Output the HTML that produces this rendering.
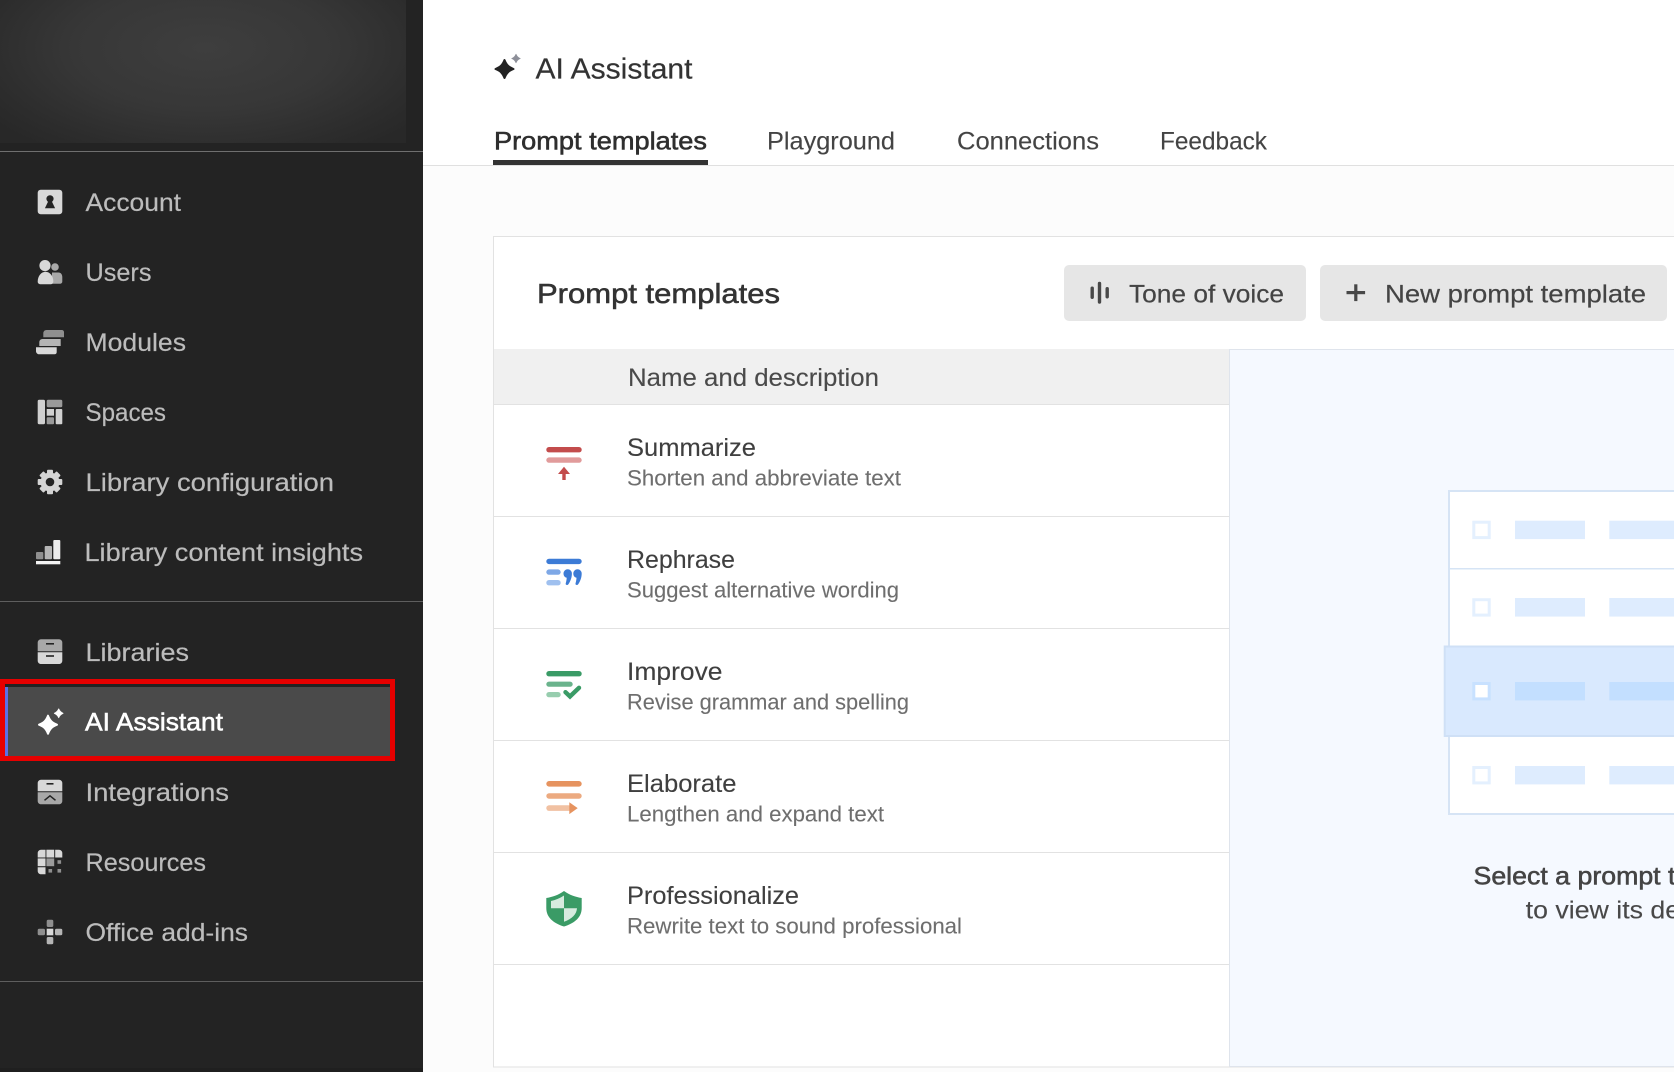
<!DOCTYPE html>
<html lang="en">
<head>
<meta charset="utf-8">
<title>AI Assistant - Prompt templates</title>
<style>
html,body{margin:0;padding:0;background:#fff;overflow:hidden}
svg{display:block}
text{font-family:"Liberation Sans",Arial,sans-serif;font-size:25px}
.nav{fill:#bcbcbc;stroke:#bcbcbc;stroke-width:.2px}
.navon{fill:#fff;stroke:#fff;stroke-width:.55px}
.h1{font-size:29px;fill:#333;stroke:#333;stroke-width:.2px}
.tab{fill:#444;stroke:#444;stroke-width:.12px}
.tabon{fill:#2e2e2e;stroke:#2e2e2e;stroke-width:.55px}
.h2{font-size:28px;fill:#333;stroke:#333;stroke-width:.55px}
.btn{fill:#444;stroke:#444;stroke-width:.2px}
.th{fill:#4a4a4a;stroke:#4a4a4a;stroke-width:.12px}
.rt{fill:#3f3f3f;stroke:#3f3f3f;stroke-width:.12px}
.rd{font-size:22px;fill:#6e6e6e;stroke:#6e6e6e;stroke-width:.1px}
.b{fill:#444;stroke:#444;stroke-width:.55px}
.s{fill:#484848;stroke:#484848;stroke-width:.12px}
</style>
</head>
<body>
<svg xmlns="http://www.w3.org/2000/svg" width="1674" height="1072" viewBox="0 0 1674 1072">
<defs>
<radialGradient id="hero" gradientUnits="userSpaceOnUse" cx="0" cy="0" r="1" gradientTransform="translate(205 48) scale(265 125)">
<stop offset="0" stop-color="#3e3e3e"/><stop offset=".5" stop-color="#373737"/><stop offset=".85" stop-color="#2c2c2c"/><stop offset="1" stop-color="#282828"/>
</radialGradient>
<path id="star" d="M0-9C2-4 4-2 9 0 4 2 2 4 0 9-2 4-4 2-9 0-4-2-2-4 0-9Z" stroke-width="2" stroke-linejoin="round"/>
<clipPath id="page"><rect width="1674" height="1072"/></clipPath>
</defs>
<g clip-path="url(#page)">
<!-- main backgrounds -->
<rect width="1674" height="1072" fill="#fff"/>
<rect x="423" y="165" width="1251" height="907" fill="#fcfcfc"/>
<rect x="423" y="165" width="1251" height="1" fill="#e0e0e0"/>

<!-- sidebar -->
<rect width="423" height="1072" fill="#232323"/>
<rect width="406" height="143" fill="url(#hero)"/>
<rect y="151" width="423" height="1" fill="#6f6f6f"/>
<rect y="601" width="423" height="1" fill="#5e5e5e"/>
<rect y="981" width="423" height="1" fill="#5e5e5e"/>
<rect y="1068" width="423" height="4" fill="#1f1f1f"/>

<!-- selected nav -->
<rect x="2.5" y="681.5" width="390" height="77" fill="#232323" stroke="#e60000" stroke-width="5"/>
<rect x="5" y="687" width="385" height="69" fill="#4a4a4a"/>
<rect x="5" y="687" width="3" height="69" fill="#5b6fe6"/>

<!-- nav text -->
<text class="nav" x="85.500" y="211" textLength="95.500" lengthAdjust="spacingAndGlyphs">Account</text>
<text class="nav" x="85.500" y="281" textLength="66" lengthAdjust="spacingAndGlyphs">Users</text>
<text class="nav" x="85.500" y="351" textLength="100.500" lengthAdjust="spacingAndGlyphs">Modules</text>
<text class="nav" x="85.500" y="421" textLength="80.500" lengthAdjust="spacingAndGlyphs">Spaces</text>
<text class="nav" x="85.500" y="491" textLength="248.500" lengthAdjust="spacingAndGlyphs">Library configuration</text>
<text class="nav" x="84.500" y="561" textLength="278.500" lengthAdjust="spacingAndGlyphs">Library content insights</text>
<text class="nav" x="85.500" y="661" textLength="103.500" lengthAdjust="spacingAndGlyphs">Libraries</text>
<text class="navon" x="85" y="730.500" textLength="138" lengthAdjust="spacingAndGlyphs">AI Assistant</text>
<text class="nav" x="85.500" y="801" textLength="143.500" lengthAdjust="spacingAndGlyphs">Integrations</text>
<text class="nav" x="85.500" y="871" textLength="120.500" lengthAdjust="spacingAndGlyphs">Resources</text>
<text class="nav" x="85.500" y="941" textLength="162.500" lengthAdjust="spacingAndGlyphs">Office add-ins</text>

<!-- account icon -->
<rect x="37.700" y="189.700" width="24.600" height="24.600" rx="3" fill="#d8d8d8"/>
<circle cx="50" cy="198.800" r="3.600" fill="#232323"/>
<path d="M48.600 200.500h2.800l3.700 7.700H44.900z" fill="#232323"/>
<!-- users -->
<circle cx="55" cy="267" r="3.800" fill="#a8a8a8"/>
<path d="M52 272.500h6.500c2.400 0 3.800 2 3.800 4.700v4.300c0 1.400-1 2.300-2.300 2.300H52z" fill="#a8a8a8"/>
<circle cx="45" cy="265.600" r="5.600" fill="#d8d8d8"/>
<path d="M45.500 271.800c4.500 0 7.800 4.500 7.800 9.500 0 2-1.200 3-3 3H41c-2.100 0-3.300-1-3.300-2.800 0-5.300 3.600-9.700 7.800-9.700z" fill="#d8d8d8"/>
<!-- modules -->
<path d="M46.500 330h15.300c1.300 0 2.200.9 2.200 2.200v5.100H43.300v-4.100c0-1.800 1.400-3.200 3.200-3.200z" fill="#8f8f8f"/>
<path d="M42.500 339h18.200v7H39.300v-3.800c0-1.800 1.400-3.200 3.200-3.200z" fill="#b5b5b5"/>
<path d="M36 347.300h20.700v4.800c0 1.300-.9 2.200-2.200 2.200H39.200c-1.800 0-3.200-1.400-3.200-3.200z" fill="#d8d8d8"/>
<!-- spaces -->
<rect x="37.700" y="399.700" width="7.300" height="24.600" rx="1.500" fill="#d0d0d0"/>
<rect x="46.700" y="399.700" width="15.600" height="7.600" rx="1.500" fill="#9a9a9a"/>
<rect x="46.700" y="409" width="7.300" height="6.700" fill="#d0d0d0"/>
<rect x="55.700" y="409" width="6.600" height="15.300" rx="1" fill="#d0d0d0"/>
<rect x="46.700" y="417.300" width="7.300" height="7" rx="1" fill="#9a9a9a"/>
<!-- gear -->
<g transform="translate(50 482)" fill="#d4d4d4">
<rect x="-3" y="-12.300" width="6" height="24.600" rx="1"/>
<rect x="-3" y="-12.300" width="6" height="24.600" rx="1" transform="rotate(45)"/>
<rect x="-3" y="-12.300" width="6" height="24.600" rx="1" transform="rotate(90)"/>
<rect x="-3" y="-12.300" width="6" height="24.600" rx="1" transform="rotate(135)"/>
<circle r="9.500"/>
<circle r="4.300" fill="#232323"/>
</g>
<!-- insights -->
<rect x="36" y="552" width="7.300" height="7.300" rx="1" fill="#8f8f8f"/>
<rect x="44.700" y="546" width="7.300" height="13.300" rx="1" fill="#b5b5b5"/>
<rect x="53.300" y="540" width="7" height="19.300" rx="1" fill="#ececec"/>
<rect x="36" y="561" width="24.300" height="3.300" fill="#f2f2f2"/>
<!-- libraries -->
<path d="M41 639.300h18c1.800 0 3.300 1.500 3.300 3.300v8.700H37.700v-8.700c0-1.800 1.500-3.300 3.300-3.300z" fill="#a8a8a8"/>
<path d="M37.700 652.300h24.600v8.400c0 1.800-1.500 3.300-3.300 3.300H41c-1.800 0-3.300-1.500-3.300-3.300z" fill="#d8d8d8"/>
<rect x="46" y="643" width="8" height="1.600" fill="#232323"/>
<rect x="46" y="655.200" width="8" height="1.600" fill="#232323"/>
<!-- AI star -->
<use href="#star" transform="translate(48 724.700)" fill="#fff" stroke="#fff"/>
<use href="#star" transform="translate(58.700 713.300) scale(.48)" fill="#fff" stroke="#fff"/>
<!-- integrations -->
<path d="M41 779.700h18c1.800 0 3.300 1.500 3.300 3.300v8.300H37.700v-8.300c0-1.800 1.500-3.300 3.300-3.300z" fill="#d8d8d8"/>
<path d="M37.700 792.300h24.600v8.700c0 1.800-1.500 3.300-3.300 3.300H41c-1.800 0-3.300-1.500-3.300-3.300z" fill="#a8a8a8"/>
<rect x="46.500" y="783" width="7" height="1.600" fill="#232323"/>
<path d="M44.500 800.300l5.500-4.500 5.500 4.500" fill="none" stroke="#232323" stroke-width="1.500"/>
<!-- resources -->
<g fill="#d8d8d8">
<path d="M41 849.700h4.500v7.800h-7.800v-4.500c0-1.800 1.500-3.300 3.300-3.300z"/>
<rect x="46.400" y="849.700" width="7.800" height="7.800"/>
<path d="M55.200 849.700h3.800c1.800 0 3.300 1.500 3.300 3.300v4.500h-7.100z"/>
<rect x="37.700" y="858.400" width="7.800" height="7.800"/>
<path d="M37.700 867.200h7.800v7.100h-4.500c-1.800 0-3.300-1.500-3.300-3.300z"/>
</g>
<rect x="46.400" y="858.400" width="7.800" height="7.800" fill="#9a9a9a"/>
<rect x="57.500" y="860.200" width="3.600" height="3.600" fill="#8f8f8f"/>
<rect x="48.500" y="869" width="3.600" height="3.600" fill="#8f8f8f"/>
<rect x="57.500" y="869" width="3.600" height="3.600" fill="#8f8f8f"/>
<!-- office -->
<rect x="46.700" y="928.700" width="6.600" height="6.600" fill="#d8d8d8"/>
<rect x="46.700" y="919.700" width="6.600" height="7.300" rx="1.500" fill="#8f8f8f"/>
<rect x="37.700" y="928.700" width="7.300" height="6.600" rx="1.500" fill="#8f8f8f"/>
<rect x="55" y="928.700" width="7.300" height="6.600" rx="1.500" fill="#b5b5b5"/>
<rect x="46.700" y="937" width="6.600" height="7.300" rx="1.500" fill="#b5b5b5"/>

<!-- header -->
<use href="#star" transform="translate(504.500 69)" fill="#222" stroke="#222"/>
<use href="#star" transform="translate(516 58.500) scale(.46)" fill="#8d8f99" stroke="#8d8f99"/>
<text class="h1" x="535.500" y="78.500" textLength="157" lengthAdjust="spacingAndGlyphs">AI Assistant</text>

<!-- tabs -->
<text class="tabon" x="494" y="149.500" textLength="213" lengthAdjust="spacingAndGlyphs">Prompt templates</text>
<rect x="493" y="160" width="215" height="5" fill="#333"/>
<text class="tab" x="767" y="149.500" textLength="128" lengthAdjust="spacingAndGlyphs">Playground</text>
<text class="tab" x="957" y="149.500" textLength="142" lengthAdjust="spacingAndGlyphs">Connections</text>
<text class="tab" x="1160" y="149.500" textLength="107" lengthAdjust="spacingAndGlyphs">Feedback</text>

<!-- card -->
<rect x="493.500" y="236.500" width="1200" height="830.500" fill="#fff" stroke="#e2e2e2"/>
<text class="h2" x="537" y="303" textLength="243" lengthAdjust="spacingAndGlyphs">Prompt templates</text>

<!-- buttons -->
<rect x="1064" y="265" width="242" height="56" rx="5" fill="#e6e6e6"/>
<rect x="1320" y="265" width="347" height="56" rx="5" fill="#e6e6e6"/>
<g fill="#484848">
<rect x="1090.500" y="286.500" width="3.400" height="12.500" rx="1.700"/>
<rect x="1097.800" y="281.700" width="3.400" height="22" rx="1.700"/>
<rect x="1105.500" y="287" width="3.400" height="11.500" rx="1.700"/>
<rect x="1346.500" y="291" width="18.600" height="3.200"/>
<rect x="1354.200" y="284.300" width="3.200" height="16.800"/>
</g>
<text class="btn" x="1129" y="302.500" textLength="155" lengthAdjust="spacingAndGlyphs">Tone of voice</text>
<text class="btn" x="1385" y="302.500" textLength="261" lengthAdjust="spacingAndGlyphs">New prompt template</text>

<!-- table header -->
<rect x="494" y="349" width="735" height="55" fill="#f0f0f0"/>
<text class="th" x="628" y="386" textLength="251" lengthAdjust="spacingAndGlyphs">Name and description</text>

<!-- row lines -->
<g fill="#e2e2e2">
<rect x="494" y="404" width="735" height="1"/>
<rect x="494" y="516" width="735" height="1"/>
<rect x="494" y="628" width="735" height="1"/>
<rect x="494" y="740" width="735" height="1"/>
<rect x="494" y="852" width="735" height="1"/>
<rect x="494" y="964" width="735" height="1"/>
</g>

<!-- rows -->
<text class="rt" x="627" y="456" textLength="129" lengthAdjust="spacingAndGlyphs">Summarize</text>
<text class="rd" x="627" y="485.500" textLength="274" lengthAdjust="spacingAndGlyphs">Shorten and abbreviate text</text>
<text class="rt" x="627" y="568" textLength="108" lengthAdjust="spacingAndGlyphs">Rephrase</text>
<text class="rd" x="627" y="597.500" textLength="272" lengthAdjust="spacingAndGlyphs">Suggest alternative wording</text>
<text class="rt" x="627" y="680" textLength="95.500" lengthAdjust="spacingAndGlyphs">Improve</text>
<text class="rd" x="627" y="709.500" textLength="282" lengthAdjust="spacingAndGlyphs">Revise grammar and spelling</text>
<text class="rt" x="627" y="792" textLength="109.500" lengthAdjust="spacingAndGlyphs">Elaborate</text>
<text class="rd" x="627" y="821.500" textLength="257" lengthAdjust="spacingAndGlyphs">Lengthen and expand text</text>
<text class="rt" x="627" y="904" textLength="172" lengthAdjust="spacingAndGlyphs">Professionalize</text>
<text class="rd" x="627" y="933.500" textLength="335" lengthAdjust="spacingAndGlyphs">Rewrite text to sound professional</text>

<!-- summarize icon -->
<rect x="546.300" y="447" width="35.400" height="5.400" rx="2.700" fill="#c34c4c"/>
<rect x="546.300" y="457.400" width="35.400" height="5.400" rx="2.700" fill="#e19b9b"/>
<path d="M564 466.700l6 7.300h-4.300v6h-3.400v-6H558z" fill="#c34c4c"/>
<!-- rephrase icon -->
<rect x="546.300" y="558.700" width="35.400" height="5.400" rx="2.700" fill="#3c7bd6"/>
<rect x="546.300" y="569.400" width="14.400" height="5.400" rx="2.700" fill="#7ea8e6"/>
<rect x="546.300" y="580" width="14.400" height="5.400" rx="2.700" fill="#9fc0ef"/>
<path id="q" d="M563.500 573.500a4.200 4.200 0 0 1 8.400 0c0 4-1.500 8-3.700 11-.8 1.100-2.900.4-2.500-1 .5-2 .9-3.500 1-5.800-2-.3-3.200-2-3.200-4.200z" fill="#3c7bd6"/>
<path d="M573.300 573.500a4.200 4.200 0 0 1 8.400 0c0 4-1.500 8-3.700 11-.8 1.100-2.900.4-2.500-1 .5-2 .9-3.500 1-5.800-2-.3-3.200-2-3.200-4.200z" fill="#3c7bd6"/>
<!-- improve icon -->
<rect x="546.300" y="671" width="35.400" height="5.400" rx="2.700" fill="#3a9b66"/>
<rect x="546.300" y="681.600" width="26.400" height="5.200" rx="2.600" fill="#6ab38c"/>
<rect x="546.300" y="692" width="14.400" height="5.300" rx="2.600" fill="#97cdae"/>
<path d="M565.500 692.200l4.500 4.300 9-8.700" fill="none" stroke="#3a9b66" stroke-width="4.400" stroke-linecap="round"/>
<!-- elaborate icon -->
<rect x="546.300" y="781" width="35.400" height="5.600" rx="2.800" fill="#e6935f"/>
<rect x="546.300" y="793.300" width="35.400" height="5.400" rx="2.700" fill="#ecaa80"/>
<rect x="546.300" y="805.300" width="25" height="5.600" rx="2.800" fill="#f1c1a2"/>
<path d="M569.300 802.300l8.400 5.800-8.400 6z" fill="#e6935f"/>
<!-- shield icon -->
<path d="M564 891c-5.500 4-11.500 6-17.700 7v10c0 9 6.500 15 17.700 18.500 11.200-3.500 17.700-9.500 17.700-18.500v-10c-6.200-1-12.200-3-17.700-7z" fill="#3a9b66"/>
<path d="M564 895.500c-4 2.800-8.500 4.500-13 5.500v7.200h13zM564 908.200h13c-.4 6-4.800 10.600-13 13.600z" fill="#d6ebdf"/>

<!-- right panel -->
<rect x="1229.500" y="349.500" width="460" height="717" fill="#f5f9ff" stroke="#dfe4ec"/>
<rect x="1449" y="491" width="240" height="323" fill="#fff" stroke="#d6e4f5" stroke-width="2"/>
<rect x="1449" y="568" width="240" height="1.500" fill="#d6e4f5"/>
<rect x="1444.700" y="646.500" width="240" height="89.500" fill="#d9e9fe" stroke="#cfe0f6" stroke-width="2"/>
<g fill="#fff" stroke="#e4f0fe" stroke-width="3">
<rect x="1473.800" y="522.200" width="15.400" height="15.400"/>
<rect x="1473.800" y="599.700" width="15.400" height="15.400"/>
<rect x="1473.800" y="683.500" width="15.400" height="15.400" stroke="#c8e1ff"/>
<rect x="1473.800" y="767.500" width="15.400" height="15.400"/>
</g>
<g fill="#deecfe">
<rect x="1515" y="520.700" width="70" height="18.400"/><rect x="1609.300" y="520.700" width="70" height="18.400"/>
<rect x="1515" y="598" width="70" height="18.600"/><rect x="1609.300" y="598" width="70" height="18.600"/>
<rect x="1515" y="766" width="70" height="18.400"/><rect x="1609.300" y="766" width="70" height="18.400"/>
</g>
<rect x="1515" y="682" width="70" height="18.400" fill="#c3dfff"/>
<rect x="1609.300" y="682" width="70" height="18.400" fill="#c3dfff"/>

<text class="b" x="1473.500" y="884.500" textLength="297" lengthAdjust="spacingAndGlyphs">Select a prompt template</text>
<text class="s" x="1525.700" y="918.500" textLength="202" lengthAdjust="spacingAndGlyphs">to view its details</text>
</g>
</svg>
</body>
</html>
